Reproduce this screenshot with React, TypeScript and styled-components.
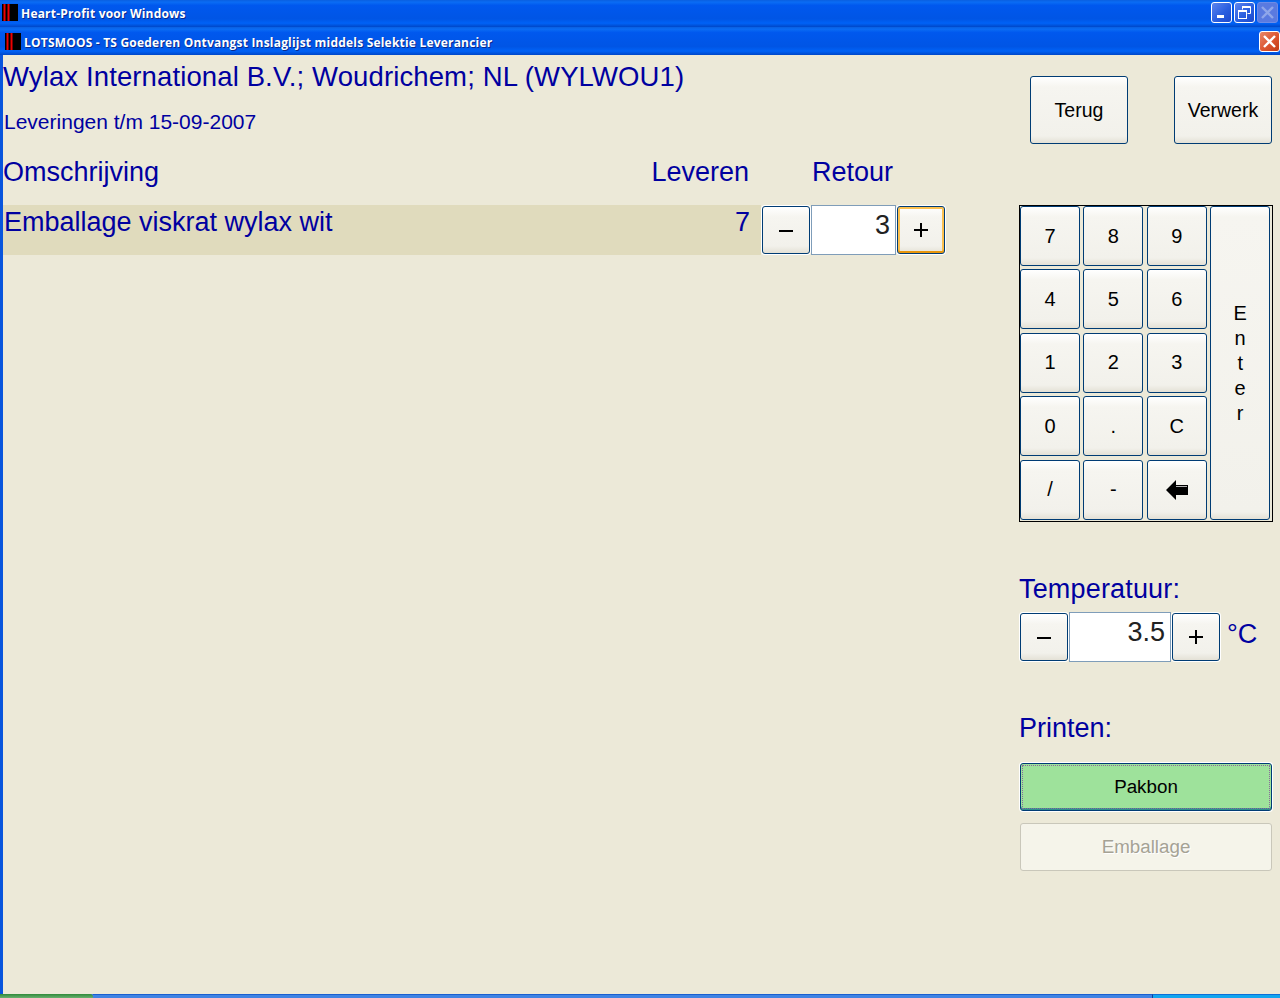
import React from 'react';
import styled, { createGlobalStyle, css } from 'styled-components';

const GlobalStyle = createGlobalStyle`
  html, body {
    margin: 0;
    padding: 0;
    height: 100%;
    overflow: hidden;
    background: #ece9d8;
  }
  * {
    box-sizing: border-box;
  }
`;

const xpBar = `linear-gradient(180deg, #0a5fe0 0%, #0a6cf4 8%, #0058ee 20%, #0055e5 70%, #0062f6 86%, #0047c8 100%)`;

const Screen = styled.div`
  width: 1280px;
  height: 998px;
  display: flex;
  flex-direction: column;
  font-family: 'Liberation Sans', Arial, sans-serif;
  background: #ece9d8;
`;

const TitleBar = styled.div<{ $height: number; $inset: number; $right: number; $bottom: number }>`
  height: ${(p) => p.$height}px;
  flex: none;
  display: flex;
  align-items: center;
  padding: 0 ${(p) => p.$right}px ${(p) => p.$bottom}px ${(p) => p.$inset}px;
  background: ${xpBar};
  color: #fff;
`;

const TitleText = styled.span`
  margin-left: 3px;
  padding-top: 2px;
  font-family: 'Open Sans', sans-serif;
  font-weight: 700;
  font-size: 12px;
  letter-spacing: 0.2px;
  text-shadow: 1px 1px 0 #0a2a8c;
  white-space: nowrap;
`;

const TitleControls = styled.div`
  margin-left: auto;
  display: flex;
  gap: 2px;
`;

const Control = styled.div<{ $variant: 'blue' | 'red' | 'off' }>`
  width: 21px;
  height: 21px;
  border-radius: 3px;
  border: 1px solid #fff;
  display: flex;
  align-items: center;
  justify-content: center;
  ${(p) =>
    p.$variant === 'blue' &&
    css`
      background: linear-gradient(135deg, #5d85ee 0%, #2a5fe0 55%, #1d49cc 100%);
    `}
  ${(p) =>
    p.$variant === 'red' &&
    css`
      background: linear-gradient(135deg, #e8886a 0%, #dc5530 55%, #c23a14 100%);
    `}
  ${(p) =>
    p.$variant === 'off' &&
    css`
      background: #5a7ae0;
      border-color: #6d8be6;
    `}
`;

const Body = styled.div`
  flex: 1;
  display: flex;
  min-height: 0;
  border-left: 3px solid #0855dd;
`;

const Main = styled.main`
  width: 1016px;
  flex: none;
  color: #0000a0;
`;

const Heading = styled.h1`
  margin: 0;
  height: 44px;
  font-size: 27.5px;
  font-weight: 400;
  line-height: 44px;
  letter-spacing: 0.12px;
  white-space: nowrap;
`;

const SubHeading = styled.div`
  height: 46px;
  padding-left: 1px;
  font-size: 21px;
  line-height: 46px;
`;

const TableHead = styled.div`
  display: grid;
  grid-template-columns: 646px 100px 144px;
  height: 60px;
  font-size: 27px;
  line-height: 54px;
`;

const HeadRight = styled.span`
  text-align: right;
`;

const Row = styled.div`
  display: flex;
  height: 50px;
`;

const RowInfo = styled.div`
  width: 758px;
  display: flex;
  justify-content: space-between;
  padding: 0 11px 0 1px;
  background: #e0dbbd;
  font-size: 27px;
  line-height: 34px;
`;

const Stepper = styled.div`
  display: flex;
  align-items: center;
  gap: 1px;
  padding-left: 1px;
`;

const buttonFace = css`
  border: 1px solid #003c74;
  border-radius: 3px;
  background: linear-gradient(180deg, #ffffff 0, #f6f5f0 10px, #f2f1eb calc(100% - 7px), #e4e1d6 100%);
  box-shadow: 0 0 0 1px #fff;
  color: #000;
  font-family: 'Liberation Sans', Arial, sans-serif;
  padding: 0;
  display: flex;
  align-items: center;
  justify-content: center;
`;

const StepButton = styled.button<{ $focused?: boolean }>`
  ${buttonFace}
  width: 48px;
  height: 48px;
  font-size: 28px;
  ${(p) =>
    p.$focused &&
    css`
      box-shadow: 0 0 0 1px #fff, inset 0 -2px 0 #e8960c, inset 0 0 0 2px #fbc04f;
    `}
`;

const ValueBox = styled.div<{ $width: number }>`
  width: ${(p) => p.$width}px;
  height: 50px;
  border: 1px solid #7f9db9;
  background: #fff;
  color: #222;
  font-size: 27px;
  line-height: 38px;
  text-align: right;
  padding-right: 5px;
`;

const Side = styled.aside`
  width: 254px;
  flex: none;
  color: #0000a0;
`;

const TopButtons = styled.div`
  display: flex;
  justify-content: space-between;
  padding: 21px 1px 0 11px;
  height: 150px;
`;

const BigButton = styled.button`
  ${buttonFace}
  width: 98px;
  height: 68px;
  font-size: 19.5px;
  box-shadow: none;
`;

const Keypad = styled.div`
  width: 254px;
  height: 317px;
  border: 1px solid #000;
  display: grid;
  grid-template-columns: repeat(4, 60px);
  grid-template-rows: repeat(5, 60px);
  gap: 3.4px;
`;

const Key = styled.button`
  ${buttonFace}
  box-shadow: none;
  width: 60px;
  height: 60px;
  font-size: 20px;
`;

const EnterKey = styled(Key)`
  grid-column: 4;
  grid-row: 1 / span 5;
  height: 314px;
  flex-direction: column;
  line-height: 25px;
`;

const Label = styled.div<{ $top: number; $tracking?: number }>`
  margin-top: ${(p) => p.$top}px;
  height: 41px;
  font-size: 27px;
  line-height: 36px;
  letter-spacing: ${(p) => p.$tracking ?? 0}px;
`;

const TempRow = styled.div`
  display: flex;
  align-items: center;
  gap: 1px;
  padding-left: 1px;
`;

const Unit = styled.span`
  margin-left: 6px;
  padding-bottom: 6px;
  font-size: 27px;
  line-height: 40px;
`;

const WideButton = styled.button<{ $kind: 'active' | 'disabled' }>`
  display: block;
  width: 252px;
  height: 48px;
  margin: 12px 0 0 1px;
  border-radius: 3px;
  font-family: 'Liberation Sans', Arial, sans-serif;
  font-size: 18.8px;
  padding: 0;
  ${(p) =>
    p.$kind === 'active'
      ? css`
          background: #9ee29b;
          border: 1px solid #003c74;
          color: #000;
          outline: 1px dotted #8a6a9a;
          outline-offset: -3px;
          box-shadow: inset 0 -2px 0 #2f8f8f, 0 0 0 1px #fff;
        `
      : css`
          background: #f5f4ea;
          border: 1px solid #c9c7ba;
          color: #a5a294;
          text-shadow: 1px 1px 0 #fff;
        `}
`;

const Taskbar = styled.div`
  height: 4px;
  flex: none;
  display: flex;
  background: #3f83e3;
`;

const StartButton = styled.div`
  width: 93px;
  background: linear-gradient(180deg, #2f8a3a 0%, #6ab06e 100%);
  border-top-right-radius: 3px;
`;

const TaskStrip = styled.div`
  flex: 1;
  border-top: 1px solid #1a5fd0;
`;

const Tray = styled.div`
  width: 128px;
  background: #12a5ee;
  border-left: 1px solid #0f3f9a;
  border-top: 1px solid #0c6fd8;
`;

const AppIcon = () => (
  <svg width="16" height="17" viewBox="0 0 16 17">
    <rect width="16" height="17" fill="#000" />
    <rect x="1.5" y="0" width="2" height="17" fill="#f00000" />
    <rect x="5.5" y="0" width="2" height="17" fill="#f00000" />
  </svg>
);

const Minimize = () => (
  <svg width="13" height="13" viewBox="0 0 13 13">
    <rect x="2" y="9" width="7" height="3" fill="#fff" />
  </svg>
);

const Restore = () => (
  <svg width="15" height="15" viewBox="0 0 15 15" fill="none" stroke="#fff">
    <path d="M5.5 4.5V1.5H13.5V8.5H10.5" />
    <path d="M5 2H13" strokeWidth="2" />
    <rect x="1.5" y="5.5" width="8" height="8" />
    <path d="M1 6H10" strokeWidth="2" />
  </svg>
);

const Cross = ({ color }: { color: string }) => (
  <svg width="15" height="15" viewBox="0 0 15 15">
    <path d="M2 2L13 13M13 2L2 13" stroke={color} strokeWidth="2.4" />
  </svg>
);

const Minus = () => (
  <svg width="16" height="16" viewBox="0 0 16 16">
    <rect x="1" y="8" width="14" height="2" fill="#000" />
  </svg>
);

const Plus = () => (
  <svg width="16" height="16" viewBox="0 0 16 16">
    <path d="M1 8H15M8 1V15" stroke="#000" strokeWidth="2" />
  </svg>
);

const BackArrow = () => (
  <svg width="24" height="22" viewBox="0 0 24 22">
    <polygon points="1,11 11,1 11,6 23,6 23,16 11,16 11,21" fill="#000" />
    <path d="M11 7.5H22" stroke="#fff" strokeWidth="1" opacity="0.7" />
  </svg>
);

const keys: React.ReactNode[] = ['7', '8', '9', '4', '5', '6', '1', '2', '3', '0', '.', 'C', '/', '-', <BackArrow key="back" />];

export default function App() {
  return (
    <Screen>
      <GlobalStyle />
      <TitleBar $height={27} $inset={2} $right={2} $bottom={2}>
        <AppIcon />
        <TitleText>Heart-Profit voor Windows</TitleText>
        <TitleControls>
          <Control $variant="blue">
            <Minimize />
          </Control>
          <Control $variant="blue">
            <Restore />
          </Control>
          <Control $variant="off">
            <Cross color="#8fa6ea" />
          </Control>
        </TitleControls>
      </TitleBar>
      <TitleBar $height={28} $inset={5} $right={0} $bottom={0}>
        <AppIcon />
        <TitleText>LOTSMOOS - TS Goederen Ontvangst Inslaglijst middels Selektie Leverancier</TitleText>
        <TitleControls>
          <Control $variant="red">
            <Cross color="#fff" />
          </Control>
        </TitleControls>
      </TitleBar>
      <Body>
        <Main>
          <Heading>Wylax International B.V.; Woudrichem; NL (WYLWOU1)</Heading>
          <SubHeading>Leveringen t/m 15-09-2007</SubHeading>
          <TableHead>
            <span>Omschrijving</span>
            <HeadRight>Leveren</HeadRight>
            <HeadRight>Retour</HeadRight>
          </TableHead>
          <Row>
            <RowInfo>
              <span>Emballage viskrat wylax wit</span>
              <span>7</span>
            </RowInfo>
            <Stepper>
              <StepButton>
                <Minus />
              </StepButton>
              <ValueBox $width={85}>3</ValueBox>
              <StepButton $focused>
                <Plus />
              </StepButton>
            </Stepper>
          </Row>
        </Main>
        <Side>
          <TopButtons>
            <BigButton>Terug</BigButton>
            <BigButton>Verwerk</BigButton>
          </TopButtons>
          <Keypad>
            {keys.map((k, i) => (
              <Key key={i}>{k}</Key>
            ))}
            <EnterKey>
              {'Enter'.split('').map((c, i) => (
                <span key={i}>{c}</span>
              ))}
            </EnterKey>
          </Keypad>
          <Label $top={49} $tracking={0.17}>
            Temperatuur:
          </Label>
          <TempRow>
            <StepButton>
              <Minus />
            </StepButton>
            <ValueBox $width={102}>3.5</ValueBox>
            <StepButton>
              <Plus />
            </StepButton>
            <Unit>°C</Unit>
          </TempRow>
          <Label $top={48}>Printen:</Label>
          <WideButton $kind="active">Pakbon</WideButton>
          <WideButton $kind="disabled">Emballage</WideButton>
        </Side>
      </Body>
      <Taskbar>
        <StartButton />
        <TaskStrip />
        <Tray />
      </Taskbar>
    </Screen>
  );
}
